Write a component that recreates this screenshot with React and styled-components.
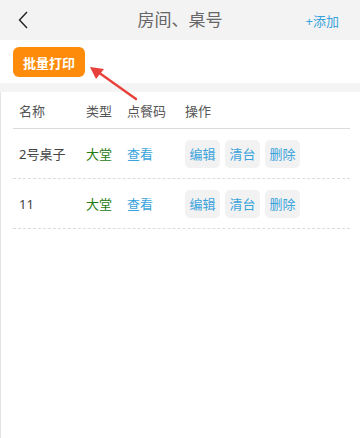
import React from "react";
import styled, { createGlobalStyle } from "styled-components";

const GlobalStyle = createGlobalStyle`
    html, body {
        margin: 0;
        padding: 0;
        background: #fff;
    }
    body {
        font-family: "Noto Sans", "Noto Sans CJK SC", sans-serif;
    }
`;

const Page = styled.div`
    position: relative;
    width: 360px;
    height: 438px;
    background: #fff;
    overflow: hidden;
`;

const Header = styled.div`
    height: 40px;
    background: #f3f3f3;
    display: flex;
    align-items: center;
    justify-content: space-between;
    padding: 0 21px 0 18px;
    box-sizing: border-box;
`;

const Back = styled.div`
    width: 16px;
    height: 20px;
    display: flex;
    align-items: center;
`;

const Title = styled.div`
    position: absolute;
    left: 0;
    right: 0;
    top: 0;
    height: 40px;
    line-height: 40px;
    text-align: center;
    font-size: 17px;
    color: #666;
    pointer-events: none;
`;

const AddLink = styled.div`
    font-size: 13px;
    color: #3aa3dc;
`;

const Toolbar = styled.div`
    height: 36px;
    padding: 7px 13px 0;
    border-bottom: 9px solid #f4f4f4;
`;

const PrintButton = styled.div`
    width: 72px;
    height: 30px;
    border-radius: 6px;
    background: #fe8c0a;
    color: #fff;
    font-size: 13px;
    font-weight: bold;
    display: flex;
    align-items: center;
    justify-content: center;
`;

const List = styled.div`
    border-left: 1px solid #e4e4e4;
    height: 346px;
    padding: 0 10px 0 12px;
`;

const Row = styled.div`
    display: grid;
    grid-template-columns: 67px 41px 58px 1fr;
    align-items: center;
    height: ${(p) => (p.$head ? "36px" : "49px")};
    padding-left: 6px;
    border-bottom: 1px ${(p) => (p.$head ? "solid #dcdcdc" : "dashed #dcdcdc")};
    font-size: 13px;
    color: ${(p) => (p.$head ? "#555" : "#444")};
`;

const Cell = styled.div`
    color: ${(p) => p.$color || "inherit"};
    white-space: nowrap;
`;

const Actions = styled.div`
    display: flex;
    gap: 5px;
`;

const ActionButton = styled.div`
    width: 35px;
    height: 28px;
    border-radius: 5px;
    background: #f2f2f2;
    color: #3aa3dc;
    font-size: 13px;
    display: flex;
    align-items: center;
    justify-content: center;
`;

const Arrow = styled.svg`
    position: absolute;
    left: 86px;
    top: 62px;
`;

const rows = [
    { name: "2号桌子", type: "大堂" },
    { name: "11", type: "大堂" },
];

export default function App() {
    return (
        <Page>
            <GlobalStyle />
            <Header>
                <Back>
                    <svg width="10" height="18" viewBox="0 0 10 18">
                        <path d="M9 1 L1.5 9 L9 17" fill="none" stroke="#222" strokeWidth="1.4" />
                    </svg>
                </Back>
                <AddLink>+添加</AddLink>
            </Header>
            <Title>房间、桌号</Title>

            <Toolbar>
                <PrintButton>批量打印</PrintButton>
            </Toolbar>

            <List>
                <Row $head>
                    <Cell>名称</Cell>
                    <Cell>类型</Cell>
                    <Cell>点餐码</Cell>
                    <Cell>操作</Cell>
                </Row>
                {rows.map((r) => (
                    <Row key={r.name}>
                        <Cell>{r.name}</Cell>
                        <Cell $color="#267a12">{r.type}</Cell>
                        <Cell $color="#3aa3dc">查看</Cell>
                        <Actions>
                            <ActionButton>编辑</ActionButton>
                            <ActionButton>清台</ActionButton>
                            <ActionButton>删除</ActionButton>
                        </Actions>
                    </Row>
                ))}
            </List>

            <Arrow width="56" height="42" viewBox="0 0 56 42">
                <path d="M50 37 L12 10" stroke="#e8403a" strokeWidth="2.4" strokeLinecap="round" />
                <path d="M4 5 L18 7 L10 17 Z" fill="#e8403a" />
            </Arrow>
        </Page>
    );
}
